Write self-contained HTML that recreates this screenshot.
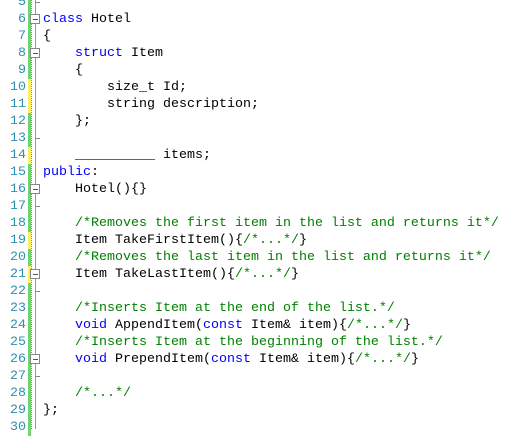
<!DOCTYPE html>
<html><head><meta charset="utf-8"><style>
body{margin:0;width:508px;height:429px;background:#fff;overflow:hidden;position:relative;font-family:"Liberation Mono","Courier New",monospace;font-size:13.33px}
.n{position:absolute;left:0;width:26px;text-align:right;color:#2B91AF;height:17px;line-height:17px}
.c{position:absolute;left:43px;white-space:pre;height:17px;line-height:17px;color:#000}
.k{color:#0000FF}.g{color:#008000}
.bar{position:absolute;left:28px;width:3px;height:17px;background:#6CD66C}
.y{background:#FFEE62}
.box{position:absolute;left:30px;width:8px;height:8px;border:1px solid #888;background:#fff}
.box:after{content:"";position:absolute;left:2px;top:4px;width:5px;height:1px;background:#555}
.tick{position:absolute;left:35px;width:5px;height:1px;background:#888}
</style></head><body>
<div style="position:absolute;left:35px;top:0;width:1px;height:429px;background:#999"></div>
<div style="position:absolute;left:31px;top:0;width:1px;height:429px;background:repeating-linear-gradient(#4a9fd0 0 1px,transparent 1px 2px)"></div>
<div id="g"></div>
<script>
var lines={5:'',6:'<span class="k">class</span> Hotel',7:'{',8:'    <span class="k">struct</span> Item',9:'    {',10:'        size_t Id;',11:'        string description;',12:'    };',13:'',14:'    __________ items;',15:'<span class="k">public</span>:',16:'    Hotel(){}',17:'',18:'    <span class="g">/*Removes the first item in the list and returns it*/</span>',19:'    Item TakeFirstItem(){<span class="g">/*...*/</span>}',20:'    <span class="g">/*Removes the last item in the list and returns it*/</span>',21:'    Item TakeLastItem(){<span class="g">/*...*/</span>}',22:'',23:'    <span class="g">/*Inserts Item at the end of the list.*/</span>',24:'    <span class="k">void</span> AppendItem(<span class="k">const</span> Item&amp; item){<span class="g">/*...*/</span>}',25:'    <span class="g">/*Inserts Item at the beginning of the list.*/</span>',26:'    <span class="k">void</span> PrependItem(<span class="k">const</span> Item&amp; item){<span class="g">/*...*/</span>}',27:'',28:'    <span class="g">/*...*/</span>',29:'};',30:''};
var yel={10:1,11:1,14:1,19:1,21:1};var boxes={6:1,8:1,16:1,21:1,26:1};var ticks={5:1,13:1,17:1,22:1,27:1};
var h='';
for(var n=5;n<=30;n++){var t=11+17*(n-6);
h+='<div class="bar'+(yel[n]?' y':'')+'" style="top:'+t+'px"></div>';
h+='<div class="n" style="top:'+t+'px">'+n+'</div>';
h+='<div class="c" style="top:'+t+'px">'+lines[n]+'</div>';
if(boxes[n])h+='<div class="box" style="top:'+(t+3)+'px"></div>';
if(ticks[n])h+='<div class="tick" style="top:'+(t+8)+'px"></div>';}
document.getElementById('g').innerHTML=h;
</script>
</body></html>
